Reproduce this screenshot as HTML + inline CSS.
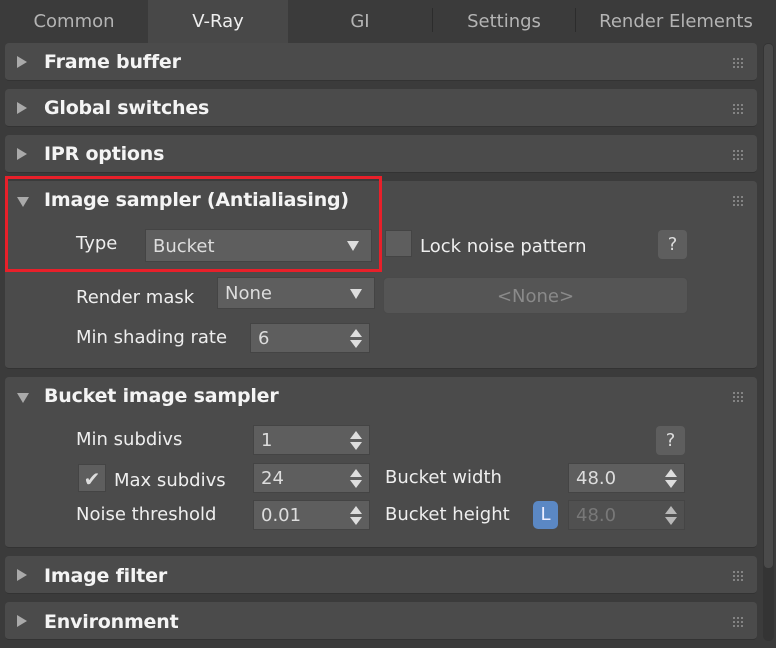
<!DOCTYPE html>
<html><head><style>
*{margin:0;padding:0;box-sizing:border-box}
body{width:776px;height:648px;background:#3b3b3b;font-family:"DejaVu Sans",sans-serif;position:relative;overflow:hidden;color:#e6e6e6}
.a{position:absolute}
.tab{position:absolute;top:0;height:42px;line-height:44px;font-size:18px;color:#b4b4b4;text-align:center}
.sep{position:absolute;top:8px;width:1px;height:24px;background:#2c2c2c}
.p{position:absolute;left:5px;width:752px;background:#4b4b4b;border-radius:4px;border-bottom:1px solid #333}
.h{position:absolute;left:39px;font-size:19px;font-weight:bold;color:#f4f4f4;letter-spacing:-0.2px}
.tri{position:absolute;left:12px;width:0;height:0}
.tr{border-top:6px solid transparent;border-bottom:6px solid transparent;border-left:10px solid #aaa}
.td{border-left:6px solid transparent;border-right:6px solid transparent;border-top:10px solid #aaa}
.dots{position:absolute;right:14px;width:11px;height:11px;background-image:radial-gradient(circle,#888 1px,transparent 1.2px);background-size:4px 4px}
.l{position:absolute;font-size:18px;color:#eee}
.box{position:absolute;background:#5e5e5e;border:1px solid #444;font-size:18px;color:#ddd;padding-left:7px}
.dd:after{content:"";position:absolute;right:12px;top:11px;border-left:6px solid transparent;border-right:6px solid transparent;border-top:10px solid #ddd}
.sp:after{content:"";position:absolute;right:7px;top:5px;width:0;height:0;border-left:6px solid transparent;border-right:6px solid transparent;border-bottom:8px solid #ddd}
.sp:before{content:"";position:absolute;right:7px;top:16px;width:0;height:0;border-left:6px solid transparent;border-right:6px solid transparent;border-top:8px solid #ddd}
.q{position:absolute;width:29px;height:29px;background:#5e5e5e;border-radius:4px;font-size:18px;text-align:center;line-height:29px;color:#ddd}
</style></head><body>
<div class="a" style="left:148px;top:0;width:140px;height:43px;background:#484848"></div>
<div class="tab" style="left:0;width:148px">Common</div>
<div class="tab" style="left:148px;width:140px;color:#eee">V-Ray</div>
<div class="tab" style="left:288px;width:144px">GI</div>
<div class="sep" style="left:432px"></div>
<div class="tab" style="left:432px;width:144px">Settings</div>
<div class="sep" style="left:575px"></div>
<div class="tab" style="left:576px;width:200px">Render Elements</div>

<div class="a" style="left:763px;top:43px;width:11px;height:598px;background:#343434;border-radius:5px"></div>
<div class="a" style="left:764px;top:44px;width:9px;height:524px;background:#4a4a4a;border-radius:4px"></div>

<div class="p" style="top:43px;height:38px"><div class="tri tr" style="top:13px"></div><div class="h" style="top:8px">Frame buffer</div><div class="dots" style="top:14px"></div></div>
<div class="p" style="top:89px;height:38px"><div class="tri tr" style="top:13px"></div><div class="h" style="top:8px">Global switches</div><div class="dots" style="top:14px"></div></div>
<div class="p" style="top:135px;height:38px"><div class="tri tr" style="top:13px"></div><div class="h" style="top:8px">IPR options</div><div class="dots" style="top:14px"></div></div>
<div class="p" style="top:181px;height:188px"><div class="tri td" style="top:16px"></div><div class="h" style="top:8px">Image sampler (Antialiasing)</div><div class="dots" style="top:14px"></div></div>
<div class="p" style="top:377px;height:171px"><div class="tri td" style="top:16px"></div><div class="h" style="top:8px">Bucket image sampler</div><div class="dots" style="top:14px"></div></div>
<div class="p" style="top:556px;height:38px"><div class="tri tr" style="top:13px"></div><div class="h" style="top:9px">Image filter</div><div class="dots" style="top:14px"></div></div>
<div class="p" style="top:602px;height:38px"><div class="tri tr" style="top:13px"></div><div class="h" style="top:9px">Environment</div><div class="dots" style="top:14px"></div></div>

<div class="l" style="left:76px;top:233px">Type</div>
<div class="box dd" style="left:145px;top:229px;width:227px;height:33px;line-height:33px">Bucket</div>
<div class="a" style="left:385px;top:230px;width:27px;height:27px;background:#5e5e5e;border:1px solid #444"></div>
<div class="l" style="left:420px;top:236px">Lock noise pattern</div>
<div class="q" style="left:658px;top:230px">?</div>

<div class="l" style="left:76px;top:287px">Render mask</div>
<div class="box dd" style="left:217px;top:277px;width:158px;height:32px;line-height:32px">None</div>
<div class="a" style="left:383px;top:277px;width:305px;height:37px;background:#555;border-radius:5px;border:1px solid #4a4a4a;text-align:center;line-height:37px;font-size:18px;color:#8a8a8a">&lt;None&gt;</div>

<div class="l" style="left:76px;top:327px">Min shading rate</div>
<div class="box sp" style="left:250px;top:323px;width:120px;height:30px;line-height:30px">6</div>

<div class="l" style="left:76px;top:429px">Min subdivs</div>
<div class="box sp" style="left:253px;top:425px;width:117px;height:30px;line-height:30px">1</div>
<div class="q" style="left:656px;top:426px">?</div>

<div class="a" style="left:78px;top:464px;width:28px;height:28px;background:#5e5e5e;border:1px solid #444;color:#ddd;font-size:20px;text-align:center;line-height:28px">✔</div>
<div class="l" style="left:114px;top:470px">Max subdivs</div>
<div class="box sp" style="left:253px;top:463px;width:117px;height:30px;line-height:30px">24</div>
<div class="l" style="left:385px;top:467px">Bucket width</div>
<div class="box sp" style="left:568px;top:463px;width:117px;height:30px;line-height:30px">48.0</div>

<div class="l" style="left:76px;top:504px">Noise threshold</div>
<div class="box sp" style="left:253px;top:500px;width:117px;height:30px;line-height:30px">0.01</div>
<div class="l" style="left:385px;top:504px">Bucket height</div>
<div class="a" style="left:533px;top:501px;width:25px;height:28px;background:#5b88c4;border-radius:5px;color:#eef;text-align:center;line-height:28px;font-size:18px">L</div>
<div class="box sp" style="left:568px;top:500px;width:117px;height:30px;line-height:30px;background:#525252;color:#888;opacity:.75">48.0</div>

<div class="a" style="left:5px;top:176px;width:377px;height:96px;border:3px solid #e8202a"></div>
</body></html>
